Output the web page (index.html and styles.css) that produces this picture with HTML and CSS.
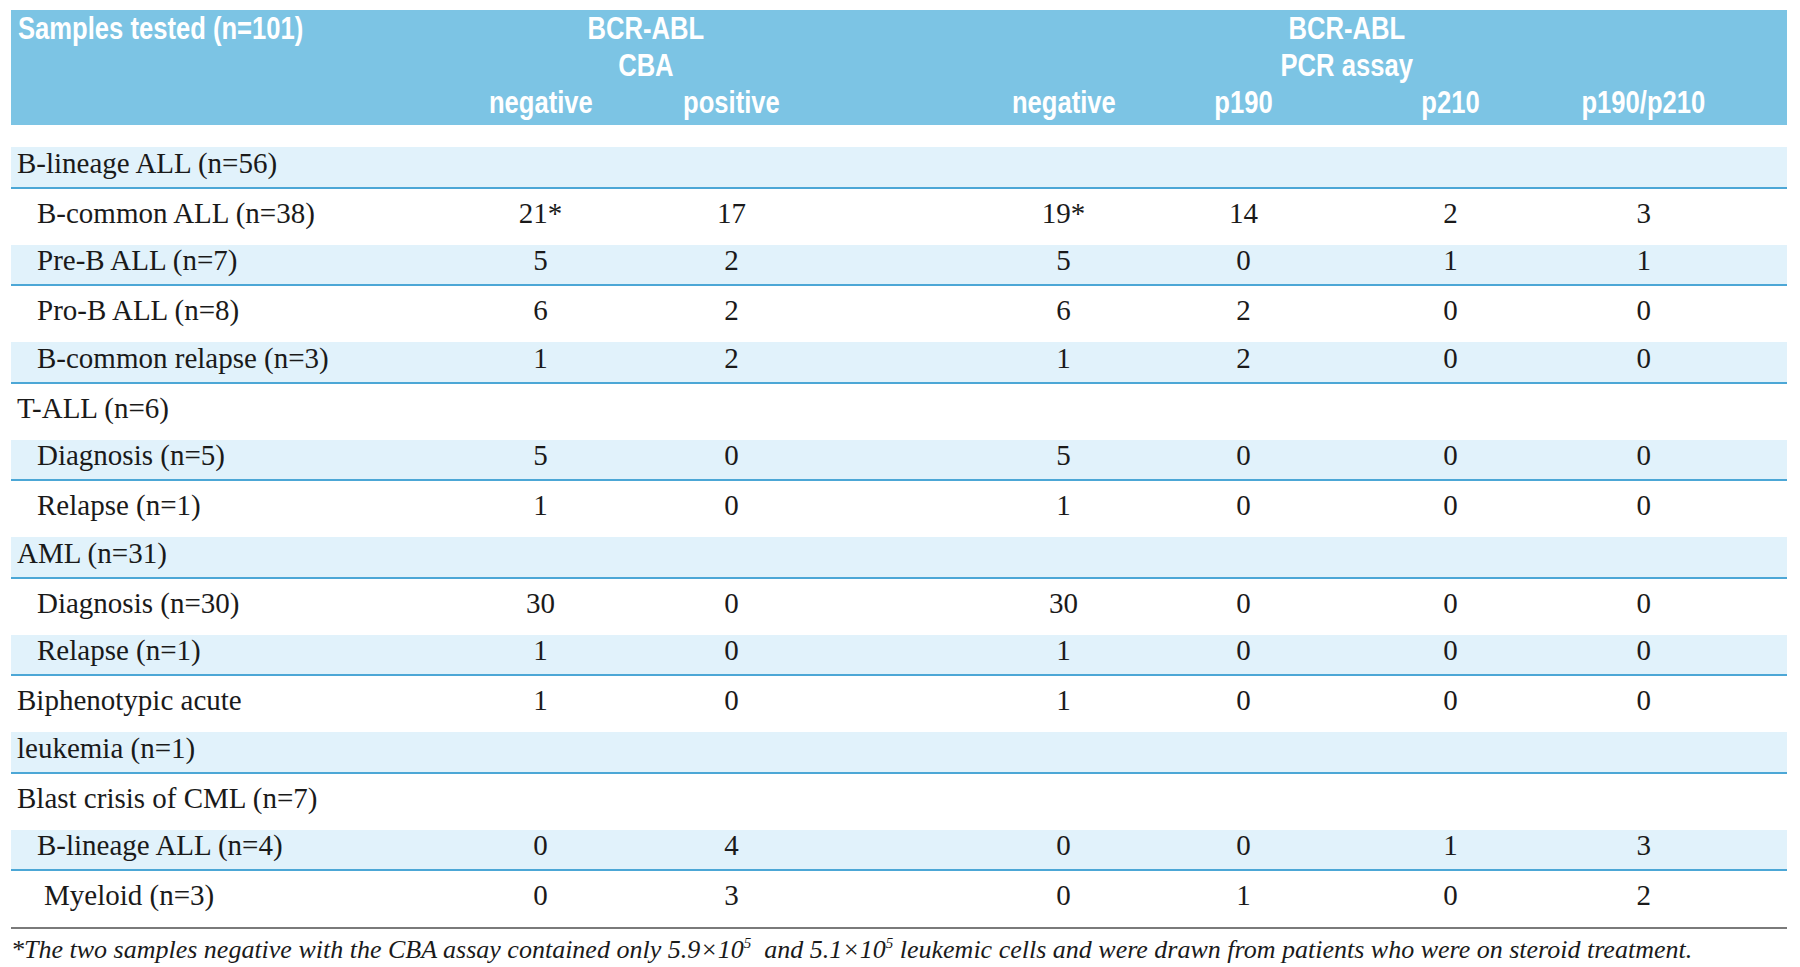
FILE: index.html
```html
<!DOCTYPE html>
<html lang="en">
<head>
<meta charset="utf-8">
<title>BCR-ABL CBA vs PCR</title>
<link rel="stylesheet" href="styles.css">
</head>
<body>
<div class="page">
  <div class="head">
    <div class="title"><span class="t">Samples tested (n=101)</span></div>
    <div class="grp grp-cba"><span class="t">BCR-ABL<br>CBA</span></div>
    <div class="grp grp-pcr"><span class="t">BCR-ABL<br>PCR assay</span></div>
    <div class="sub c1"><span class="t">negative</span></div>
    <div class="sub c2"><span class="t">positive</span></div>
    <div class="sub c3"><span class="t">negative</span></div>
    <div class="sub c4"><span class="t">p190</span></div>
    <div class="sub c5"><span class="t">p210</span></div>
    <div class="sub c6"><span class="t">p190/p210</span></div>
  </div>
  <div class="rows">
    <div class="row shade"><div class="lbl">B-lineage ALL (n=56)</div></div>
    <div class="row"><div class="lbl ind">B-common ALL (n=38)</div><div class="c1">21*</div><div class="c2">17</div><div class="c3">19*</div><div class="c4">14</div><div class="c5">2</div><div class="c6">3</div></div>
    <div class="row shade"><div class="lbl ind">Pre-B ALL (n=7)</div><div class="c1">5</div><div class="c2">2</div><div class="c3">5</div><div class="c4">0</div><div class="c5">1</div><div class="c6">1</div></div>
    <div class="row"><div class="lbl ind">Pro-B ALL (n=8)</div><div class="c1">6</div><div class="c2">2</div><div class="c3">6</div><div class="c4">2</div><div class="c5">0</div><div class="c6">0</div></div>
    <div class="row shade"><div class="lbl ind">B-common relapse (n=3)</div><div class="c1">1</div><div class="c2">2</div><div class="c3">1</div><div class="c4">2</div><div class="c5">0</div><div class="c6">0</div></div>
    <div class="row"><div class="lbl">T-ALL (n=6)</div></div>
    <div class="row shade"><div class="lbl ind">Diagnosis (n=5)</div><div class="c1">5</div><div class="c2">0</div><div class="c3">5</div><div class="c4">0</div><div class="c5">0</div><div class="c6">0</div></div>
    <div class="row"><div class="lbl ind">Relapse (n=1)</div><div class="c1">1</div><div class="c2">0</div><div class="c3">1</div><div class="c4">0</div><div class="c5">0</div><div class="c6">0</div></div>
    <div class="row shade"><div class="lbl">AML (n=31)</div></div>
    <div class="row"><div class="lbl ind">Diagnosis (n=30)</div><div class="c1">30</div><div class="c2">0</div><div class="c3">30</div><div class="c4">0</div><div class="c5">0</div><div class="c6">0</div></div>
    <div class="row shade"><div class="lbl ind">Relapse (n=1)</div><div class="c1">1</div><div class="c2">0</div><div class="c3">1</div><div class="c4">0</div><div class="c5">0</div><div class="c6">0</div></div>
    <div class="row"><div class="lbl">Biphenotypic acute</div><div class="c1">1</div><div class="c2">0</div><div class="c3">1</div><div class="c4">0</div><div class="c5">0</div><div class="c6">0</div></div>
    <div class="row shade"><div class="lbl">leukemia (n=1)</div></div>
    <div class="row"><div class="lbl">Blast crisis of CML (n=7)</div></div>
    <div class="row shade"><div class="lbl ind">B-lineage ALL (n=4)</div><div class="c1">0</div><div class="c2">4</div><div class="c3">0</div><div class="c4">0</div><div class="c5">1</div><div class="c6">3</div></div>
    <div class="row"><div class="lbl ind2">Myeloid (n=3)</div><div class="c1">0</div><div class="c2">3</div><div class="c3">0</div><div class="c4">1</div><div class="c5">0</div><div class="c6">2</div></div>
  </div>
  <p class="note">*The two samples negative with the CBA assay contained only 5.9×10<sup>5</sup>&nbsp; and 5.1×10<sup>5</sup> leukemic cells and were drawn from patients who were on steroid treatment.</p>
</div>
</body>
</html>
```
FILE: styles.css
```css
:root {
  --cols: 434px 191px 261.5px 256px 193.5px 200px 239.5px;
}
body {
  margin: 0;
  background: #ffffff;
}
.page {
  width: 1776px;
  margin: 10px 0 0 11px;
}
.head {
  display: grid;
  grid-template-columns: var(--cols);
  grid-template-rows: 37px 37px 37px;
  padding-bottom: 4px;
  background: #7cc4e4;
  color: #ffffff;
  font-family: "Liberation Sans", Arial, sans-serif;
  font-weight: bold;
  font-size: 32px;
  line-height: 37px;
}
.head .t {
  display: inline-block;
  transform: scaleX(0.8);
  transform-origin: center;
}
.head .title {
  grid-column: 1;
  grid-row: 1;
  padding-left: 7px;
  white-space: nowrap;
}
.head .title .t {
  transform-origin: left center;
}
.head .grp-cba {
  grid-column: 2 / 4;
  grid-row: 1 / 3;
  text-align: center;
  padding-right: 50px;
}
.head .grp-pcr {
  grid-column: 4 / 8;
  grid-row: 1 / 3;
  text-align: center;
  padding-left: 9px;
}
.head .sub {
  grid-row: 3;
}
.c1, .c2, .c3, .c4, .c5, .c6 {
  text-align: center;
  white-space: nowrap;
}
.c1 { grid-column: 2; }
.c2 { grid-column: 3; padding-right: 70.5px; }
.c3 { grid-column: 4; padding-left: 76px; }
.c4 { grid-column: 5; padding-right: 13.5px; }
.c5 { grid-column: 6; padding-left: 7px; }
.c6 { grid-column: 7; padding-right: 46px; }

.rows {
  margin-top: 15px;
  padding-bottom: 7px;
  border-bottom: 2px solid #7a7a7a;
  font-family: "Liberation Serif", "DejaVu Serif", serif;
  font-size: 29px;
  color: #1a1a1a;
}
.row {
  display: grid;
  grid-template-columns: var(--cols);
  align-items: center;
  height: 48.75px;
  box-sizing: border-box;
}
.row.shade {
  background: linear-gradient(to bottom, transparent 7px, #e1f2fb 7px);
  border-bottom: 2px solid #4ca7d6;
}
.lbl {
  grid-column: 1;
  padding-left: 6px;
  white-space: nowrap;
}
.lbl.ind {
  padding-left: 26px;
}
.lbl.ind2 {
  padding-left: 33px;
}
.note {
  margin: 0;
  padding-top: 8px;
  font-family: "Liberation Serif", "DejaVu Serif", serif;
  font-style: italic;
  font-size: 26px;
  line-height: 26px;
  color: #1a1a1a;
  white-space: nowrap;
}
.note sup {
  font-size: 15px;
  line-height: 0;
  vertical-align: 10px;
}
```
